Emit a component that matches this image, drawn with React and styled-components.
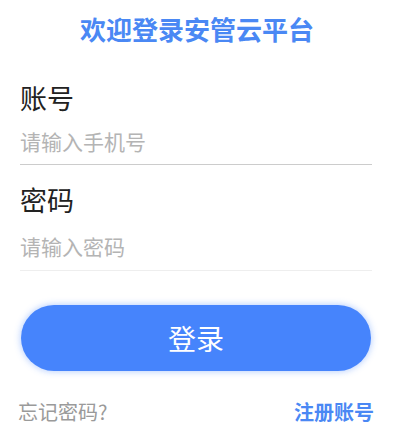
import React from 'react';
import styled, { createGlobalStyle } from 'styled-components';

const GlobalStyle = createGlobalStyle`
  * { box-sizing: border-box; }
  body {
    margin: 0;
    background: #ffffff;
    font-family: "Noto Sans CJK SC", "Noto Sans", sans-serif;
  }
`;

const Page = styled.div`
  width: 394px;
  height: 435px;
  display: flex;
  flex-direction: column;
  padding: 0 22px 0 20px;
`;

const Title = styled.h1`
  margin: 0;
  height: 58px;
  line-height: 58px;
  text-align: center;
  font-size: 26px;
  font-weight: 700;
  color: #4a88f4;
  padding-left: 2px;
`;

const Field = styled.div`
  display: flex;
  flex-direction: column;
  margin-top: ${({ $top }) => $top}px;
`;

const Label = styled.label`
  height: 40px;
  line-height: 40px;
  font-size: 27px;
  color: #222222;
`;

const Input = styled.input`
  height: ${({ $h }) => $h}px;
  margin-top: ${({ $gap }) => $gap}px;
  border: 0;
  border-bottom: 1px solid ${({ $line }) => $line};
  outline: none;
  padding: 0 0 5px;
  font-family: inherit;
  font-size: 21px;
  color: #333333;
  background: transparent;

  &::placeholder {
    color: #b4b4b4;
  }
`;

const LoginButton = styled.button`
  margin: 34px 0 0 1px;
  width: 350px;
  height: 66px;
  border: 0;
  border-radius: 33px;
  background: #4684fc;
  color: #ffffff;
  font-family: inherit;
  font-size: 28px;
  box-shadow: 0 0 6px 1px rgba(70, 132, 252, 0.35);
  cursor: pointer;
`;

const Footer = styled.div`
  margin: 26px -2px 0 -2px;
  height: 30px;
  line-height: 30px;
  display: flex;
  justify-content: space-between;
  font-size: 20px;
`;

const Link = styled.a`
  color: ${({ $primary }) => ($primary ? '#4a88f4' : '#9a9a9a')};
  font-weight: ${({ $primary }) => ($primary ? 700 : 400)};
  text-decoration: none;
`;

const App = () => {
  return (
    <>
      <GlobalStyle />
      <Page>
        <Title>欢迎登录安管云平台</Title>
        <Field $top={20}>
          <Label>账号</Label>
          <Input $h={42} $gap={5} $line="#cccccc" placeholder="请输入手机号" />
        </Field>
        <Field $top={15}>
          <Label>密码</Label>
          <Input $h={44} $gap={7} $line="#eeeeee" type="password" placeholder="请输入密码" />
        </Field>
        <LoginButton>登录</LoginButton>
        <Footer>
          <Link>忘记密码?</Link>
          <Link $primary>注册账号</Link>
        </Footer>
      </Page>
    </>
  );
};

export default App;
